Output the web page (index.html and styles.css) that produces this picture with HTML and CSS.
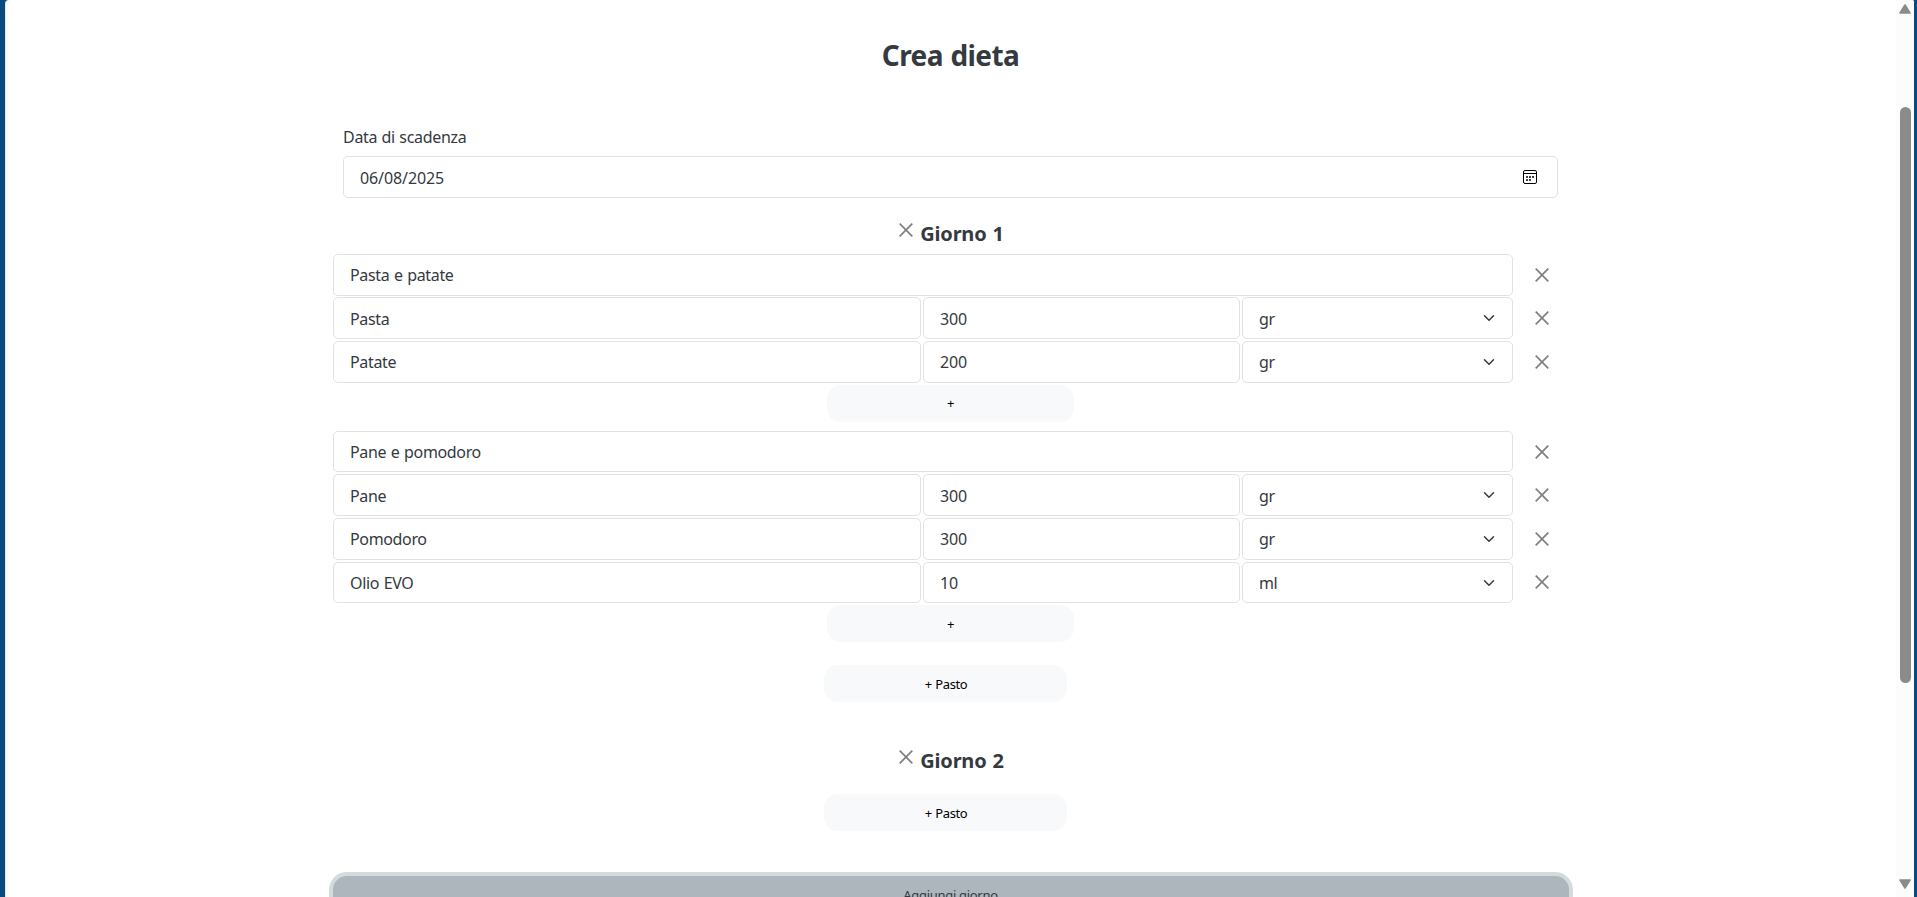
FILE: index.html
```html
<!DOCTYPE html>
<html lang="it">
<head>
<meta charset="utf-8">
<title>Crea dieta</title>
<link rel="stylesheet" href="styles.css">
</head>
<body>
<svg width="0" height="0" class="defs">
  <symbol id="x" viewBox="0 0 14 14"><path d="M.7.7l12.6 12.6M13.3.7L.7 13.3" fill="none" stroke="#808080" stroke-width="1.7"/></symbol>
  <symbol id="chev" viewBox="0 0 16 16"><path d="M2 5l6 6 6-6" fill="none" stroke="#343a40" stroke-width="2" stroke-linecap="round" stroke-linejoin="round"/></symbol>
</svg>
<div class="window">
  <main class="page">
    <h1 class="title">Crea dieta</h1>
    <div class="expiry">
      <label class="label" for="date">Data di scadenza</label>
      <div class="control">
        <input class="field digits" id="date" value="06/08/2025">
        <svg class="calendar" viewBox="0 0 14 14"><rect x=".5" y=".5" width="13" height="13" rx="1.5" fill="none" stroke="#000"/><path d="M1 3.5h12" stroke="#000"/><path d="M3 6h2v2H3zM6 6h2v2H6zM9 6h2v2H9zM3 9h2v2H3zM6 9h2v2H6z" fill="#444"/></svg>
      </div>
    </div>

    <h2 class="day"><svg class="x"><use href="#x"/></svg><span>Giorno 1</span></h2>
    <section class="meal">
      <div class="row"><input class="field whole" value="Pasta e patate"><svg class="x"><use href="#x"/></svg></div>
      <div class="row"><input class="field" value="Pasta"><input class="field digits" value="300"><div class="control"><select class="field"><option>gr</option></select><svg class="chev"><use href="#chev"/></svg></div><svg class="x"><use href="#x"/></svg></div>
      <div class="row"><input class="field" value="Patate"><input class="field digits" value="200"><div class="control"><select class="field"><option>gr</option></select><svg class="chev"><use href="#chev"/></svg></div><svg class="x"><use href="#x"/></svg></div>
      <button class="add">+</button>
    </section>
    <section class="meal">
      <div class="row"><input class="field whole" value="Pane e pomodoro"><svg class="x"><use href="#x"/></svg></div>
      <div class="row"><input class="field" value="Pane"><input class="field digits" value="300"><div class="control"><select class="field"><option>gr</option></select><svg class="chev"><use href="#chev"/></svg></div><svg class="x"><use href="#x"/></svg></div>
      <div class="row"><input class="field" value="Pomodoro"><input class="field digits" value="300"><div class="control"><select class="field"><option>gr</option></select><svg class="chev"><use href="#chev"/></svg></div><svg class="x"><use href="#x"/></svg></div>
      <div class="row"><input class="field" value="Olio EVO"><input class="field digits" value="10"><div class="control"><select class="field"><option>ml</option></select><svg class="chev"><use href="#chev"/></svg></div><svg class="x"><use href="#x"/></svg></div>
      <button class="add">+</button>
    </section>
    <button class="add add-meal">+ Pasto</button>

    <h2 class="day day-next"><svg class="x"><use href="#x"/></svg><span>Giorno 2</span></h2>
    <button class="add add-meal">+ Pasto</button>
    <button class="add-day">Aggiungi giorno</button>
  </main>
  <div class="scrollbar">
    <svg class="arrow" viewBox="0 0 12 10"><path d="M6 1L11 9H1z" fill="#8b8b8b" stroke="#8b8b8b" stroke-width="1.6" stroke-linejoin="round"/></svg>
    <div class="thumb"></div>
    <svg class="arrow" viewBox="0 0 12 10"><path d="M6 9L11 1H1z" fill="#8b8b8b" stroke="#8b8b8b" stroke-width="1.6" stroke-linejoin="round"/></svg>
  </div>
</div>
</body>
</html>
```

FILE: styles.css
```css
* { box-sizing: border-box; }
body {
  margin: 0;
  height: 897px;
  overflow: hidden;
  background: #0b4a7e;
  color: #343a40;
  font: 16px/24px "Noto Sans", sans-serif;
  letter-spacing: -0.3px;
  word-spacing: 0.5px;
}
svg { display: block; }
.defs { position: absolute; }
.window {
  display: flex;
  height: 897px;
  margin: 0 3px 0 5px;
  border-left: 1px solid #dfeaf2;
  border-radius: 4px 2px 0 0;
  background: #fff;
  overflow: hidden;
}
.page {
  flex: 1;
  display: flex;
  flex-direction: column;
  align-items: center;
  padding: 36px 1px 0 0;
  height: 897px;
  overflow: hidden;
}
.page > * { flex-shrink: 0; }
.title { margin: 0; font-size: 28px; line-height: 38px; letter-spacing: -0.6px; word-spacing: 1px; }
.expiry { width: 1215px; margin-top: 51px; }
.label { display: block; height: 31px; }
.control { position: relative; }
.field {
  display: block;
  width: 100%;
  height: 41.8px;
  margin: 0;
  padding: 1px 16px 0;
  border: 1px solid #e2e2e4;
  border-radius: 5px;
  background: #fff;
  color: #343a40;
  font: inherit;
  letter-spacing: -0.35px;
  word-spacing: 0.8px;
  appearance: none;
  outline: 0;
}
.digits { letter-spacing: -0.1px; }
#date { padding-top: 2px; }
.calendar { position: absolute; top: 14px; right: 21px; width: 14px; height: 14px; }
.chev { position: absolute; top: 15px; right: 18px; width: 12px; height: 12px; }
.x { width: 14px; height: 14px; }
.day {
  display: flex;
  gap: 7px;
  height: 28px;
  margin: 21.7px 0 6.3px;
  padding-left: 2px;
  font-size: 20px;
  line-height: 29px;
  letter-spacing: -0.2px;
  word-spacing: 1px;
}
.day .x { margin-top: 4px; }
.meal {
  width: 1235px;
  display: flex;
  flex-direction: column;
  align-items: center;
  margin-bottom: 9px;
}
.row {
  display: grid;
  grid-template-columns: 588px 317px 271px 14px;
  column-gap: 2px;
  align-items: center;
  width: 100%;
  height: 41.8px;
  margin-bottom: 1.83px;
}
.row .x { margin-left: 20px; }
.whole { grid-column: 1 / 4; }
.add {
  width: 247px;
  height: 37px;
  border: 0;
  padding: 0;
  border-radius: 14px;
  background: #f8f9fb;
  color: #000;
  font: 13px/18px "Noto Sans", sans-serif;
  letter-spacing: -0.4px;
  word-spacing: 0.5px;
}
.add-meal { width: 243px; margin: 14px 10px 0 0; padding: 1px 0 0 1px; }
.day-next { margin: 43.5px 0 20.4px; }
.day-next + .add-meal { margin-top: 0; }
.add-day {
  width: 1236px;
  height: 37px;
  margin: 45px 0 0;
  border: 0;
  padding: 0;
  border-radius: 14px;
  background: #adb5bd;
  box-shadow: 0 0 0 4px #d5dadd;
  color: #343a40;
  font: 13px/18px "Noto Sans", sans-serif;
  letter-spacing: -0.3px;
}
.scrollbar {
  width: 18px;
  display: flex;
  flex-direction: column;
  align-items: center;
  padding: 4px 0 8px;
  background: #fcfcfc;
}
.arrow { width: 12px; height: 10px; }
.thumb { width: 11px; height: 576px; margin: 93px 0 auto; border-radius: 6px; background: #8b8b8b; }
```
